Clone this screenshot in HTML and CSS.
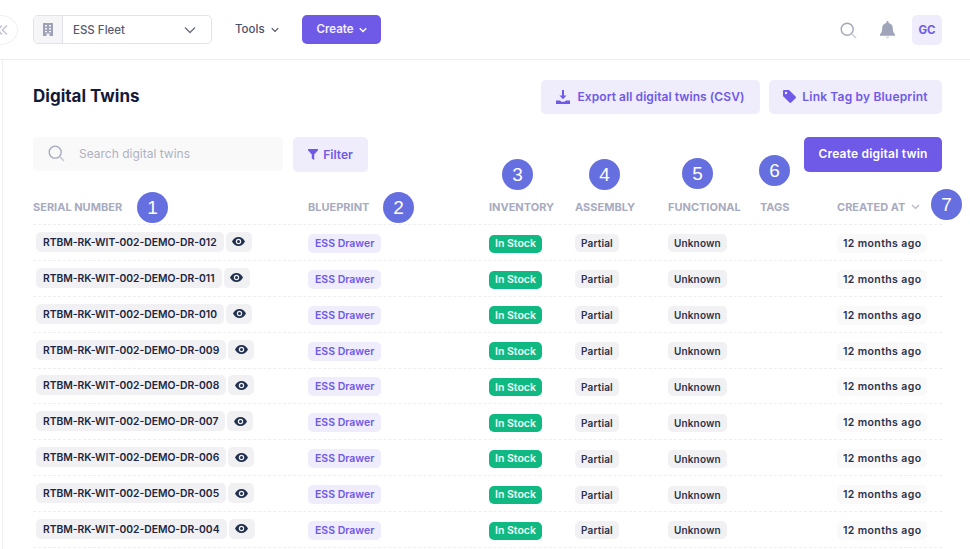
FILE: index.html
```html
<!DOCTYPE html>
<html lang="en">
<head>
<meta charset="utf-8">
<title>Digital Twins</title>
<link rel="stylesheet" href="styles.css">
</head>
<body>
<div class="app">
  <header class="topbar">
    <button class="collapse" aria-label="Collapse"><svg width="12" height="12" viewBox="0 0 12 12" fill="none" stroke="#c3c6d3" stroke-width="1.6"><path d="M6 1.5 1.5 6 6 10.5M11 1.5 6.5 6 11 10.5"/></svg></button>
    <div class="org">
      <span class="org-icon"><svg width="10" height="13" viewBox="0 0 10 13"><path fill="#9ea2b8" fill-rule="evenodd" d="M0 0h10v13H6.500v-2.500h-3V13H0zM2 2v1.600h2V2zm4 0v1.600h2V2zM2 5v1.600h2V5zm4 0v1.600h2V5zM2 8v1.200h2V8zm4 0v1.200h2V8z"/></svg></span>
      <span class="org-name">ESS Fleet</span>
      <svg class="org-caret" width="12" height="8" viewBox="0 0 12 8" fill="none" stroke="#6b7085" stroke-width="1.4"><path d="M1 1.500 6 6.500l5-5"/></svg>
    </div>
    <button class="tools"><span class="top-label">Tools</span> <svg width="8" height="6" viewBox="0 0 8 6" fill="none" stroke="#4d5168" stroke-width="1.1"><path d="M.7 1.200 4 4.500l3.300-3.300"/></svg></button>
    <button class="create"><span class="top-label">Create</span> <svg width="8" height="6" viewBox="0 0 8 6" fill="none" stroke="#fff" stroke-width="1.3"><path d="M.7 1.200 4 4.500l3.300-3.300"/></svg></button>
    <div class="top-right">
      <svg width="17" height="17" viewBox="0 0 17 17" fill="none" stroke="#a3a7bb" stroke-width="1.4"><circle cx="7.200" cy="7.200" r="6"/><path d="m11.600 11.600 4.400 4.400" stroke="#d0d2dc" stroke-width="1.600"/></svg>
      <svg class="bell" width="15" height="18" viewBox="0 0 15 18"><path fill="#a0a4b8" d="M7.500 0c.7 0 1.100.5 1.100 1.200v.9c2.600.5 4.200 2.600 4.200 5.200 0 3.300.9 4.500 2.200 6V14.800H0v-1.500c1.300-1.500 2.200-2.700 2.200-6 0-2.600 1.600-4.700 4.200-5.200v-.9C6.400.5 6.800 0 7.500 0z"/><path fill="#dcdde5" d="M5.500 15.500h4c0 1.200-.9 2-2 2s-2-.8-2-2z"/></svg>
      <span class="avatar">GC</span>
    </div>
  </header>

  <main class="content">
    <div class="title-row">
      <h1>Digital Twins</h1>
      <div class="title-actions">
        <button class="soft export"><svg width="14" height="14" viewBox="0 0 14 14"><path fill="#6e5ae6" d="M6 0h2v5.500h2.500L7 9.300 3.500 5.500H6zM0 10.500h4l1.500 1.200h3l1.500-1.200h4V14H0z"/></svg>Export all digital twins (CSV)</button>
        <button class="soft link"><svg width="13" height="13" viewBox="0 0 13 13"><path fill="#6e5ae6" fill-rule="evenodd" d="M0 1.200C0 .5.500 0 1.200 0h4.300c.4 0 .7.100 1 .4l6.100 6.100c.5.500.5 1.200 0 1.700l-4.400 4.400c-.5.500-1.200.5-1.700 0L.4 6.500C.1 6.200 0 5.900 0 5.500zM3 4.200a1.200 1.200 0 1 0 0-2.400 1.200 1.200 0 0 0 0 2.400z"/></svg>Link Tag by Blueprint</button>
      </div>
    </div>

    <div class="filter-row">
      <label class="search"><svg width="17" height="17" viewBox="0 0 17 17" fill="none" stroke="#a3a7bb" stroke-width="1.3"><circle cx="7.200" cy="7.200" r="6"/><path d="m11.600 11.600 4.400 4.400" stroke="#c6c8d4" stroke-width="1.500"/></svg><span>Search digital twins</span></label>
      <button class="soft filter"><svg width="10" height="11" viewBox="0 0 10 11"><path fill="#6e5ae6" d="M0 0h10v1.300L6.200 5.600V11L3.800 9.400V5.600L0 1.300z"/></svg>Filter</button>
      <button class="primary">Create digital twin</button>
    </div>

    <div class="table">
      <div class="row head">
        <div>Serial number</div><div>Blueprint</div><div>Inventory</div><div>Assembly</div><div>Functional</div><div>Tags</div>
        <div class="sort">Created at <svg width="9" height="6" viewBox="0 0 9 6" fill="none" stroke="#b0b3c5" stroke-width="1.100"><path d="M1 1l3.500 3.500L8 1"/></svg></div>
      </div>

      <div class="row"><div class="serial"><span class="chip code">RTBM-RK-WIT-002-DEMO-DR-012</span><span class="chip eye"><svg width="13" height="9" viewBox="0 0 13 9"><path fill="#22304f" fill-rule="evenodd" d="M6.500 0C9.400 0 11.800 1.900 13 4.500 11.800 7.100 9.400 9 6.500 9S1.200 7.100 0 4.500C1.200 1.900 3.600 0 6.500 0zm0 1.800a2.700 2.700 0 1 0 0 5.400 2.700 2.700 0 0 0 0-5.400zm0 1.200a1.500 1.500 0 1 1 0 3 1.500 1.500 0 0 1 0-3z"/></svg></span></div><div><span class="chip blueprint">ESS Drawer</span></div><div><span class="chip stock">In Stock</span></div><div><span class="chip state">Partial</span></div><div><span class="chip state">Unknown</span></div><div></div><div><span class="chip date">12 months ago</span></div></div>
      <div class="row"><div class="serial"><span class="chip code">RTBM-RK-WIT-002-DEMO-DR-011</span><span class="chip eye"><svg width="13" height="9" viewBox="0 0 13 9"><path fill="#22304f" fill-rule="evenodd" d="M6.500 0C9.400 0 11.800 1.900 13 4.500 11.800 7.100 9.400 9 6.500 9S1.200 7.100 0 4.500C1.200 1.900 3.600 0 6.500 0zm0 1.800a2.700 2.700 0 1 0 0 5.400 2.700 2.700 0 0 0 0-5.400zm0 1.200a1.500 1.500 0 1 1 0 3 1.500 1.500 0 0 1 0-3z"/></svg></span></div><div><span class="chip blueprint">ESS Drawer</span></div><div><span class="chip stock">In Stock</span></div><div><span class="chip state">Partial</span></div><div><span class="chip state">Unknown</span></div><div></div><div><span class="chip date">12 months ago</span></div></div>
      <div class="row"><div class="serial"><span class="chip code">RTBM-RK-WIT-002-DEMO-DR-010</span><span class="chip eye"><svg width="13" height="9" viewBox="0 0 13 9"><path fill="#22304f" fill-rule="evenodd" d="M6.500 0C9.400 0 11.800 1.900 13 4.500 11.800 7.100 9.400 9 6.500 9S1.200 7.100 0 4.500C1.200 1.900 3.600 0 6.500 0zm0 1.800a2.700 2.700 0 1 0 0 5.400 2.700 2.700 0 0 0 0-5.400zm0 1.200a1.500 1.500 0 1 1 0 3 1.500 1.500 0 0 1 0-3z"/></svg></span></div><div><span class="chip blueprint">ESS Drawer</span></div><div><span class="chip stock">In Stock</span></div><div><span class="chip state">Partial</span></div><div><span class="chip state">Unknown</span></div><div></div><div><span class="chip date">12 months ago</span></div></div>
      <div class="row"><div class="serial"><span class="chip code">RTBM-RK-WIT-002-DEMO-DR-009</span><span class="chip eye"><svg width="13" height="9" viewBox="0 0 13 9"><path fill="#22304f" fill-rule="evenodd" d="M6.500 0C9.400 0 11.800 1.900 13 4.500 11.800 7.100 9.400 9 6.500 9S1.200 7.100 0 4.500C1.200 1.900 3.600 0 6.500 0zm0 1.800a2.700 2.700 0 1 0 0 5.400 2.700 2.700 0 0 0 0-5.400zm0 1.200a1.500 1.500 0 1 1 0 3 1.500 1.500 0 0 1 0-3z"/></svg></span></div><div><span class="chip blueprint">ESS Drawer</span></div><div><span class="chip stock">In Stock</span></div><div><span class="chip state">Partial</span></div><div><span class="chip state">Unknown</span></div><div></div><div><span class="chip date">12 months ago</span></div></div>
      <div class="row"><div class="serial"><span class="chip code">RTBM-RK-WIT-002-DEMO-DR-008</span><span class="chip eye"><svg width="13" height="9" viewBox="0 0 13 9"><path fill="#22304f" fill-rule="evenodd" d="M6.500 0C9.400 0 11.800 1.900 13 4.500 11.800 7.100 9.400 9 6.500 9S1.200 7.100 0 4.500C1.200 1.900 3.600 0 6.500 0zm0 1.800a2.700 2.700 0 1 0 0 5.400 2.700 2.700 0 0 0 0-5.400zm0 1.200a1.500 1.500 0 1 1 0 3 1.500 1.500 0 0 1 0-3z"/></svg></span></div><div><span class="chip blueprint">ESS Drawer</span></div><div><span class="chip stock">In Stock</span></div><div><span class="chip state">Partial</span></div><div><span class="chip state">Unknown</span></div><div></div><div><span class="chip date">12 months ago</span></div></div>
      <div class="row"><div class="serial"><span class="chip code">RTBM-RK-WIT-002-DEMO-DR-007</span><span class="chip eye"><svg width="13" height="9" viewBox="0 0 13 9"><path fill="#22304f" fill-rule="evenodd" d="M6.500 0C9.400 0 11.800 1.900 13 4.500 11.800 7.100 9.400 9 6.500 9S1.200 7.100 0 4.500C1.200 1.900 3.600 0 6.500 0zm0 1.800a2.700 2.700 0 1 0 0 5.400 2.700 2.700 0 0 0 0-5.400zm0 1.200a1.500 1.500 0 1 1 0 3 1.500 1.500 0 0 1 0-3z"/></svg></span></div><div><span class="chip blueprint">ESS Drawer</span></div><div><span class="chip stock">In Stock</span></div><div><span class="chip state">Partial</span></div><div><span class="chip state">Unknown</span></div><div></div><div><span class="chip date">12 months ago</span></div></div>
      <div class="row"><div class="serial"><span class="chip code">RTBM-RK-WIT-002-DEMO-DR-006</span><span class="chip eye"><svg width="13" height="9" viewBox="0 0 13 9"><path fill="#22304f" fill-rule="evenodd" d="M6.500 0C9.400 0 11.800 1.900 13 4.500 11.800 7.100 9.400 9 6.500 9S1.200 7.100 0 4.500C1.200 1.900 3.600 0 6.500 0zm0 1.800a2.700 2.700 0 1 0 0 5.400 2.700 2.700 0 0 0 0-5.400zm0 1.200a1.500 1.500 0 1 1 0 3 1.500 1.500 0 0 1 0-3z"/></svg></span></div><div><span class="chip blueprint">ESS Drawer</span></div><div><span class="chip stock">In Stock</span></div><div><span class="chip state">Partial</span></div><div><span class="chip state">Unknown</span></div><div></div><div><span class="chip date">12 months ago</span></div></div>
      <div class="row"><div class="serial"><span class="chip code">RTBM-RK-WIT-002-DEMO-DR-005</span><span class="chip eye"><svg width="13" height="9" viewBox="0 0 13 9"><path fill="#22304f" fill-rule="evenodd" d="M6.500 0C9.400 0 11.800 1.900 13 4.500 11.800 7.100 9.400 9 6.500 9S1.200 7.100 0 4.500C1.200 1.900 3.600 0 6.500 0zm0 1.800a2.700 2.700 0 1 0 0 5.400 2.700 2.700 0 0 0 0-5.400zm0 1.200a1.500 1.500 0 1 1 0 3 1.500 1.500 0 0 1 0-3z"/></svg></span></div><div><span class="chip blueprint">ESS Drawer</span></div><div><span class="chip stock">In Stock</span></div><div><span class="chip state">Partial</span></div><div><span class="chip state">Unknown</span></div><div></div><div><span class="chip date">12 months ago</span></div></div>
      <div class="row"><div class="serial"><span class="chip code">RTBM-RK-WIT-002-DEMO-DR-004</span><span class="chip eye"><svg width="13" height="9" viewBox="0 0 13 9"><path fill="#22304f" fill-rule="evenodd" d="M6.500 0C9.400 0 11.800 1.900 13 4.500 11.800 7.100 9.400 9 6.500 9S1.200 7.100 0 4.500C1.200 1.900 3.600 0 6.500 0zm0 1.800a2.700 2.700 0 1 0 0 5.400 2.700 2.700 0 0 0 0-5.400zm0 1.200a1.500 1.500 0 1 1 0 3 1.500 1.500 0 0 1 0-3z"/></svg></span></div><div><span class="chip blueprint">ESS Drawer</span></div><div><span class="chip stock">In Stock</span></div><div><span class="chip state">Partial</span></div><div><span class="chip state">Unknown</span></div><div></div><div><span class="chip date">12 months ago</span></div></div>
    </div>
  </main>

  <span class="marker m1">1</span>
  <span class="marker m2">2</span>
  <span class="marker m3">3</span>
  <span class="marker m4">4</span>
  <span class="marker m5">5</span>
  <span class="marker m6">6</span>
  <span class="marker m7">7</span>
</div>
</body>
</html>
```

FILE: styles.css
```css
* { box-sizing: border-box; }
html, body { margin: 0; height: 100%; overflow: hidden; background: #fff; }
body { font-family: Inter, "Liberation Sans", sans-serif; color: #1c2340; }
button { font: inherit; border: 0; cursor: pointer; padding: 0; }

.app { position: relative; width: 970px; height: 549px; overflow: hidden; }

.topbar {
  height: 60px;
  padding: 15px 28px 0 33px;
  border-bottom: 1px solid #eeeef1;
  display: flex;
  align-items: flex-start;
  position: relative;
}
.collapse {
  position: absolute;
  left: -17px;
  top: 15px;
  width: 35px;
  height: 30px;
  border-radius: 50%;
  background: #fff;
  border: 1px solid #efeff3;
  display: flex;
  align-items: center;
  justify-content: flex-end;
  padding-right: 9px;
}
.org {
  width: 179px;
  height: 29px;
  border: 1.5px solid #e1e2eb;
  border-radius: 5px;
  display: flex;
  align-items: center;
  margin-right: 23px;
}
.org-icon {
  width: 29px;
  height: 100%;
  background: #f6f6f9;
  border-right: 1px solid #e1e2eb;
  border-radius: 4px 0 0 4px;
  display: flex;
  align-items: center;
  justify-content: center;
}
.org-name { flex: 1; padding-left: 10px; font-size: 11.500px; font-weight: 500; color: #565b70; }
.org-caret { margin-right: 15px; }
.tools {
  background: none;
  height: 29px;
  font-size: 11.500px;
  font-weight: 500;
  color: #4d5168;
  margin-right: 23px;
  display: flex;
  align-items: center;
  gap: 6px;
  width: 44px;
  white-space: nowrap;
}
.top-label { margin-bottom: 2px; }
.create {
  width: 79px;
  height: 29px;
  border-radius: 5px;
  background: #6e5ae6;
  color: #f3f1ff;
  font-size: 11.500px;
  font-weight: 600;
  display: flex;
  align-items: center;
  justify-content: center;
  gap: 5px;
}
.top-right { margin-left: auto; height: 30px; display: flex; align-items: center; }
.bell { margin-left: 23px; margin-right: 17px; }
.avatar {
  width: 30px;
  height: 30px;
  border-radius: 5px;
  background: #efecfc;
  color: #6e5ae6;
  font-size: 11.500px;
  font-weight: 700;
  display: flex;
  align-items: center;
  justify-content: center;
}

.content {
  margin-left: 2px;
  border-left: 1px solid #f0f0f3;
  height: 489px;
  padding: 20px 28px 0 30px;
}
.title-row { display: flex; align-items: center; justify-content: space-between; height: 34px; }
h1 { margin: 0 0 2px; font-size: 17px; font-weight: 700; color: #141a38; }
.title-actions { display: flex; gap: 9px; }
.soft {
  background: #efecfc;
  color: #6e5ae6;
  border-radius: 5px;
  font-size: 12px;
  font-weight: 600;
  display: flex;
  align-items: center;
  justify-content: center;
  white-space: nowrap;
  padding-bottom: 1px;
}
.export { width: 219px; height: 34px; gap: 7px; letter-spacing: .07px; }
.link { width: 173px; height: 34px; gap: 6px; letter-spacing: .18px; }
.filter-row { display: flex; align-items: flex-start; gap: 10px; margin-top: 23px; }
.search {
  width: 250px;
  height: 34px;
  background: #f9f9fa;
  border-radius: 5px;
  display: flex;
  align-items: center;
  gap: 14px;
  padding: 0 0 1px 15px;
  font-size: 12px;
  color: #aeb1c2;
}
.filter { width: 75px; height: 35px; gap: 5px; }
.primary {
  margin-left: auto;
  width: 138px;
  height: 35px;
  border-radius: 5px;
  background: #6e5ae6;
  color: #fff;
  font-size: 12px;
  font-weight: 600;
  letter-spacing: .2px;
  padding-bottom: 2px;
}

.table { margin-top: 17px; }
.row {
  display: grid;
  grid-template-columns: 275px 181px 86px 93px 92px 77px 105px;
  align-items: center;
  height: 35.890px;
  padding-bottom: 1px;
  border-bottom: 1px dashed #eeeef1;
}
.row.head {
  height: 36px;
  font-size: 11px;
  font-weight: 700;
  text-transform: uppercase;
  color: #a8abbf;
  white-space: nowrap;
  padding-bottom: 0;
}
.sort { display: flex; align-items: center; gap: 6px; }
.serial { display: flex; align-items: center; gap: 2px; padding-left: 3px; }
.chip {
  display: inline-flex;
  align-items: center;
  height: 19px;
  border-radius: 5px;
  white-space: nowrap;
  font-size: 10.500px;
  font-weight: 600;
}
.code { height: 20px; padding: 0 7px; background: #f1f1f4; font-size: 10.300px; color: #20263f; }
.eye { height: 20px; width: 26px; justify-content: center; background: #f1f1f4; }
.blueprint { height: 19px; padding: 0 7px; background: #efecfc; color: #6e5ae6; font-size: 10.500px; }
.stock { height: 18px; padding: 0 6px; background: #0fb981; color: #effdf7; }
.state { height: 18px; padding: 0 6px; background: #f1f1f4; color: #2d324a; font-size: 10px; letter-spacing: .15px; }
.date { padding: 0 6px; background: #f9f9fa; color: #2d324a; font-size: 10.500px; letter-spacing: .38px; height: 19px; }

.marker {
  position: absolute;
  width: 31px;
  height: 31px;
  border-radius: 50%;
  background: #656fe0;
  color: #fff;
  font-family: "Liberation Sans", sans-serif;
  font-size: 19px;
  display: flex;
  align-items: center;
  justify-content: center;
}
.m1 { left: 137px; top: 192px; }
.m2 { left: 383px; top: 192px; }
.m3 { left: 502px; top: 159px; }
.m4 { left: 589px; top: 159px; }
.m5 { left: 682px; top: 158px; }
.m6 { left: 759px; top: 155px; }
.m7 { left: 931px; top: 189px; }
```
